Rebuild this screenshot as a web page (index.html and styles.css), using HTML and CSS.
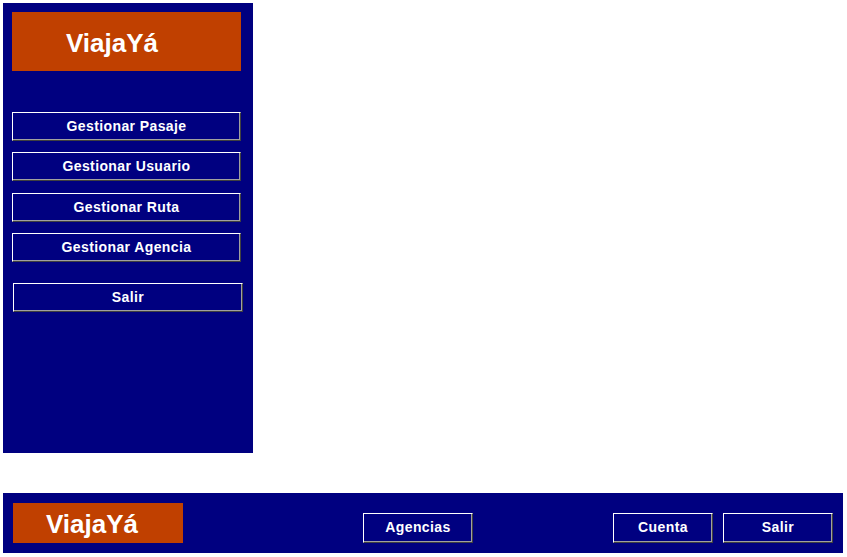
FILE: index.html
```html
<!DOCTYPE html>
<html lang="es">
<head>
<meta charset="utf-8">
<title>ViajaYá</title>
<link rel="stylesheet" href="styles.css">
</head>
<body>
  <aside class="sidebar">
    <div class="logo logo-side">ViajaYá</div>
    <nav class="menu">
      <button class="btn menu-btn">Gestionar Pasaje</button>
      <button class="btn menu-btn">Gestionar Usuario</button>
      <button class="btn menu-btn">Gestionar Ruta</button>
      <button class="btn menu-btn">Gestionar Agencia</button>
    </nav>
    <button class="btn exit-btn">Salir</button>
  </aside>
  <footer class="footer">
    <div class="logo logo-foot">ViajaYá</div>
    <button class="btn foot-btn agencias">Agencias</button>
    <button class="btn foot-btn cuenta">Cuenta</button>
    <button class="btn foot-btn salir">Salir</button>
  </footer>
</body>
</html>
```
FILE: styles.css
```css
html, body {
  margin: 0;
  padding: 0;
  background: #ffffff;
}
body {
  padding: 3px;
  font-family: "Liberation Sans", Arial, sans-serif;
}
.sidebar {
  width: 250px;
  height: 450px;
  background: #000080;
  box-sizing: border-box;
  padding: 9px 0 0 9px;
  display: flex;
  flex-direction: column;
  align-items: flex-start;
}
.logo {
  background: #c04000;
  color: #ffffff;
  font-weight: bold;
  font-size: 26px;
  display: flex;
  align-items: center;
  box-sizing: border-box;
  padding-top: 3px;
}
.logo-side {
  width: 229px;
  height: 59px;
  padding-left: 54px;
}
.menu {
  margin-top: 41px;
  display: flex;
  flex-direction: column;
  gap: 11px;
}
.menu-btn:nth-child(3) {
  margin-top: 1px;
}
.btn {
  background: #000080;
  color: #ffffff;
  font-family: "Liberation Sans", Arial, sans-serif;
  font-weight: bold;
  font-size: 14px;
  box-sizing: border-box;
  border: 1px solid;
  border-color: #ffffff #404040 #404040 #ffffff;
  box-shadow: inset -1px -1px 0 #a0a0a0;
  padding: 0 0 2px 0;
  margin: 0;
  text-align: center;
  letter-spacing: 0.4px;
}
.menu-btn {
  width: 229px;
  height: 29px;
}
.exit-btn {
  width: 230px;
  height: 29px;
  margin-top: 21px;
  margin-left: 1px;
}
.footer {
  width: 840px;
  height: 60px;
  margin-top: 40px;
  background: #000080;
  box-sizing: border-box;
  padding: 10px 10px 10px 10px;
  display: flex;
  align-items: flex-start;
}
.logo-foot {
  width: 170px;
  height: 40px;
  padding-left: 33px;
}
.foot-btn {
  height: 30px;
  margin-top: 10px;
}
.agencias {
  width: 110px;
  margin-left: 180px;
}
.cuenta {
  width: 100px;
  margin-left: auto;
}
.salir {
  width: 110px;
  margin-left: 10px;
}
```
